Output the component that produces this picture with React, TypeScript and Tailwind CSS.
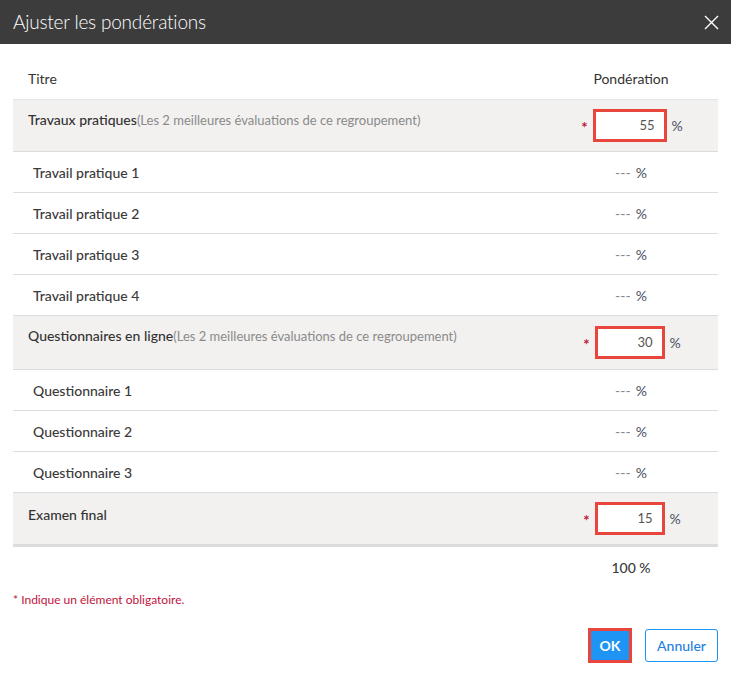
import React from "react";

const font = { fontFamily: "Lato, 'Open Sans', sans-serif" };

function Group({ title, note, value, h, inputW }: { title: string; note?: string; value: string; h: string; inputW: string }) {
  return (
    <div className={`flex ${h} bg-[#f2f1f0] border-b border-[#dcdcdc]`}>
      <div className="flex-1 pl-[15px] pt-[10px] text-[14px] leading-[20px] text-[#333]">
        <span className="font-medium">{title}</span>
        {note && <span className="text-[13px] text-[#8a8a8a]">{note}</span>}
      </div>
      <div className="w-[174px] flex items-center justify-center pl-[2px]">
        <span className="text-[#c0143c] text-[15px] font-bold mr-[5px] mt-[4px]">*</span>
        <div className={`${inputW} h-[33px] bg-white border-[3px] border-[#e8453c] flex items-center justify-end pr-[9px] text-[13px] text-[#555]`}>{value}</div>
        <span className="ml-[5px] text-[14px] text-[#4a5060]">%</span>
      </div>
    </div>
  );
}

function Child({ title }: { title: string }) {
  return (
    <div className="flex h-[41px] items-center border-b border-[#dcdcdc]">
      <div className="flex-1 pl-[20px] text-[14px] font-medium text-[#3a3a3a]">{title}</div>
      <div className="w-[174px] flex justify-center text-[14px] text-[#4a5060]">
        <span className="text-[#888]">---</span>
        <span className="ml-[5px]">%</span>
      </div>
    </div>
  );
}

export default function App() {
  return (
    <div className="w-[731px] h-[676px] bg-white flex flex-col" style={font}>
      <div className="h-[44px] bg-[#3c3c3c] flex items-center justify-between pl-[13px] pr-[12px]">
        <span className="text-white text-[19px] font-light tracking-[-0.2px]">Ajuster les pondérations</span>
        <svg width="15" height="15" viewBox="0 0 15 15">
          <path d="M1 1 L14 14 M14 1 L1 14" stroke="#fff" strokeWidth="1.4" />
        </svg>
      </div>
      <div className="px-[13px]">
        <div className="mt-[24px] flex h-[32px] items-start border-b border-[#e6e6e6]">
          <div className="flex-1 pl-[15px] text-[14px] text-[#333]">Titre</div>
          <div className="w-[174px] flex justify-center text-[14px] text-[#333]">Pondération</div>
        </div>
        <Group title="Travaux pratiques" note="(Les 2 meilleures évaluations de ce regroupement)" value="55" h="h-[52px]" inputW="w-[74px]" />
        <Child title="Travail pratique 1" />
        <Child title="Travail pratique 2" />
        <Child title="Travail pratique 3" />
        <Child title="Travail pratique 4" />
        <Group title="Questionnaires en ligne" note="(Les 2 meilleures évaluations de ce regroupement)" value="30" h="h-[54px]" inputW="w-[70px]" />
        <Child title="Questionnaire 1" />
        <Child title="Questionnaire 2" />
        <Child title="Questionnaire 3" />
        <div className="flex h-[54px] bg-[#f2f1f0] border-b-[3px] border-[#dcdcdc]">
          <div className="flex-1 pl-[15px] pt-[12px] text-[14px] leading-[20px] text-[#333] font-medium">Examen final</div>
          <div className="w-[174px] flex items-center justify-center pl-[2px]">
            <span className="text-[#c0143c] text-[15px] font-bold mr-[5px] mt-[4px]">*</span>
            <div className="w-[70px] h-[33px] bg-white border-[3px] border-[#e8453c] flex items-center justify-end pr-[9px] text-[13px] text-[#555]">15</div>
            <span className="ml-[5px] text-[14px] text-[#4a5060]">%</span>
          </div>
        </div>
        <div className="flex h-[40px] items-center">
          <div className="flex-1" />
          <div className="w-[174px] flex justify-center text-[14px] font-medium text-[#3a3a3a]">100 %</div>
        </div>
        <div className="mt-[4px] text-[12px] text-[#c0143c]">* Indique un élément obligatoire.</div>
        <div className="mt-[19px] flex justify-end items-center gap-[13px]">
          <button className="w-[44px] h-[35px] bg-[#1e95f5] border-[3px] border-[#e8453c] text-white text-[14px] font-bold">OK</button>
          <button className="w-[73px] h-[33px] bg-white border border-[#1e95f5] rounded-[3px] text-[#1e7fe0] text-[14px] font-medium">Annuler</button>
        </div>
      </div>
    </div>
  );
}
